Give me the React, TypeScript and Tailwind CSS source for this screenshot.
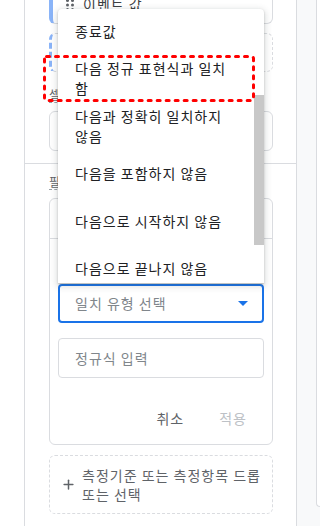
import { Plus } from 'lucide-react';

const MATCH_OPTIONS = [
  '종료값',
  '다음 정규 표현식과 일치 함',
  '다음과 정확히 일치하지 않음',
  '다음을 포함하지 않음',
  '다음으로 시작하지 않음',
  '다음으로 끝나지 않음',
];

function DragDots() {
  return (
    <svg width="8" height="12" viewBox="0 0 8 12" aria-hidden="true">
      {[0, 1].map((c) =>
        [0, 1, 2].map((r) => (
          <circle key={`${c}-${r}`} cx={1.5 + c * 5} cy={1.5 + r * 4.5} r="1.5" fill="#5f6368" />
        ))
      )}
    </svg>
  );
}

function SectionLabel({ text, className = '' }: { text: string; className?: string }) {
  return (
    <div className={`flex ${className}`}>
      <span className="text-[12px] leading-[14px] text-[#5f6368] border-b border-dashed border-[#9aa0a6]">
        {text}
      </span>
    </div>
  );
}

function MatchMenu() {
  return (
    <div className="absolute left-[58px] top-[9px] w-[206px] h-[274px] bg-white rounded-t-[4px] shadow-[0_2px_6px_2px_rgba(60,64,67,0.15),0_1px_2px_rgba(60,64,67,0.3)] flex overflow-hidden">
      <ul className="w-[196px] -mt-[2px]">
        {MATCH_OPTIONS.map((opt) => (
          <li
            key={opt}
            className="h-[47.5px] flex items-center pl-[17px] pr-[16px] text-[14px] leading-[20px] text-[#202124]"
          >
            {opt}
          </li>
        ))}
      </ul>
      <div className="w-[10px] flex flex-col">
        <div className="mt-[86px] h-[150px] bg-[#c8c8c8]" />
      </div>
    </div>
  );
}

function Highlight() {
  return (
    <svg
      className="absolute left-[43px] top-[55px]"
      width="212"
      height="47"
      viewBox="0 0 212 47"
      aria-hidden="true"
    >
      <rect
        x="1.5"
        y="1.5"
        width="209"
        height="44"
        rx="2"
        fill="none"
        stroke="#ff0000"
        strokeWidth="3"
        strokeDasharray="3 6"
        strokeLinecap="round"
      />
    </svg>
  );
}

export default function App() {
  return (
    <div
      className="relative w-[320px] h-[526px] overflow-hidden bg-white flex tracking-[1px]"
      style={{ fontFamily: '"Noto Sans CJK KR", "Noto Sans", sans-serif' }}
    >
      <div className="w-[24px] shrink-0" />

      {/* Settings panel */}
      <div className="w-[273px] shrink-0 border-x border-[#dadce0] flex flex-col">
        {/* Values section */}
        <div className="pl-[24px] pr-[23px] pb-[12px] border-b border-[#dadce0]">
          <div className="-mt-[15px] h-[39px] flex items-center rounded-b-md border border-l-[4px] border-[#dadce0] border-l-[#8ab4f8] pl-[13px] gap-[9px]">
            <DragDots />
            <span className="text-[14px] text-[#3c4043]">이벤트 값</span>
          </div>
          <div className="mt-[9px] h-[39px] rounded-md border border-dashed border-[#dadce0] border-l-[3px] border-l-[#8ab4f8]" />
          <SectionLabel text="셀 유형" className="mt-[16px] mb-[8px]" />
          <div className="h-[40px] rounded-md border border-[#dadce0] flex items-center px-4 text-[14px] text-[#202124]">
            히트맵
          </div>
        </div>

        {/* Filter section */}
        <div className="pl-[24px] pr-[23px] pt-[11px]">
          <SectionLabel text="필터" className="mb-[8px]" />
          <div className="rounded-md border border-[#dadce0]">
            <div className="h-[40px] border-b border-[#dadce0] flex items-center px-4 text-[14px] text-[#202124]">
              이벤트 이름
            </div>
            <div className="px-[8px] pt-[45px] pb-[8px]">
              <div className="h-[39px] rounded-[4px] border-2 border-[#1a73e8] flex items-center pl-[15px] pr-[14px]">
                <span className="flex-1 text-[14px] text-[#80868b]">일치 유형 선택</span>
                <svg width="10" height="5" viewBox="0 0 10 5" aria-hidden="true">
                  <path d="M0 0h10L5 5z" fill="#1a73e8" />
                </svg>
              </div>
              <div className="mt-[15px] h-[40px] rounded-[4px] border border-[#dadce0] flex items-center pl-[16px] text-[14px] text-[#80868b]">
                정규식 입력
              </div>
              <div className="mt-[22px] h-[36px] flex items-center justify-end gap-[35px] pr-[17px] text-[14px]">
                <span className="text-[#5f6368]">취소</span>
                <span className="text-[#bdc1c6]">적용</span>
              </div>
            </div>
          </div>
          <div className="mt-[10px] h-[59px] rounded-md border border-dashed border-[#dadce0] flex items-center pl-[11px] pr-[2px] gap-[6px]">
            <Plus className="h-[15px] w-[15px] text-[#5f6368] shrink-0" strokeWidth={2.4} aria-hidden="true" />
            <span className="text-[14px] leading-[19px] text-[#5f6368]">측정기준 또는 측정항목 드롭 또는 선택</span>
          </div>
        </div>
      </div>

      {/* Next column */}
      <div className="flex-1 bg-[#f8f9fa] pl-[19px]">
        <div className="h-[507px] bg-white border-l border-b border-[#dadce0] rounded-bl-md" />
      </div>

      <MatchMenu />
      <Highlight />
    </div>
  );
}
